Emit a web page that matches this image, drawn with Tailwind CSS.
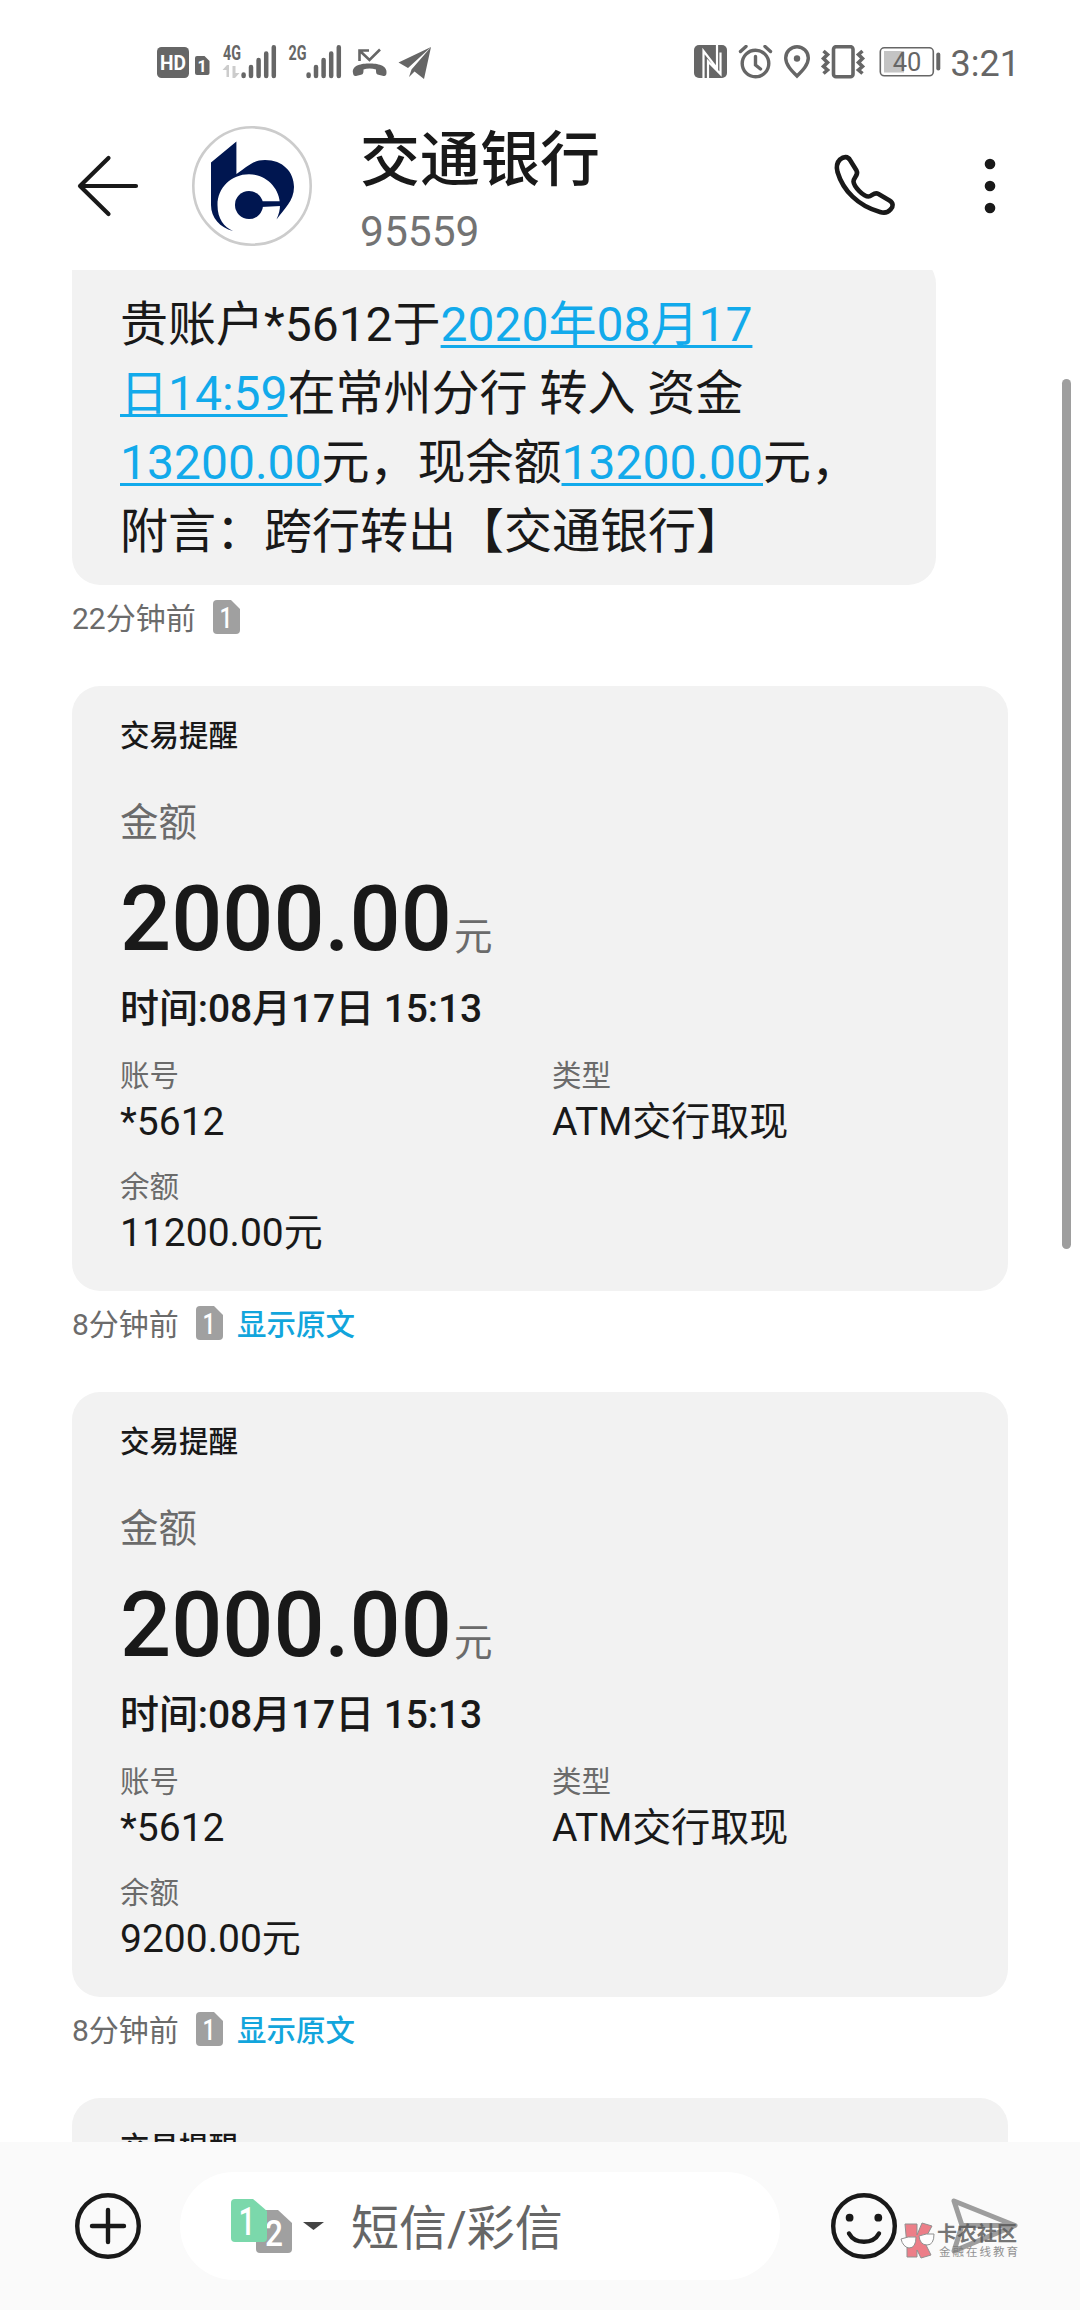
<!DOCTYPE html>
<html lang="zh-CN">
<head>
<meta charset="utf-8">
<title>交通银行</title>
<script src="https://cdn.jsdelivr.net/npm/@tailwindcss/browser@4"></script>
</head>
<body class="bg-white">
<svg class="hidden">
  <symbol id="sim" viewBox="0 0 27 34"><path d="M4 0H18L27 9V30Q27 34 23 34H4Q0 34 0 30V4Q0 0 4 0Z"/></symbol>
  <symbol id="bars" viewBox="0 0 36 34"><path d="M2.6 29.5v1.4M10 22v9M17.600 15v16M25.200 8.500v22.500M32.800 2.300v28.700" fill="none" stroke="#666" stroke-width="4.500" stroke-linecap="round"/></symbol>
</svg>
<div class="relative flex h-[2310px] w-[1080px] flex-col overflow-hidden bg-white font-['Roboto','Noto_Sans_CJK_SC',sans-serif] text-[#191919]">

  <!-- status bar -->
  <div class="flex h-[84px] shrink-0 items-start justify-between pt-[37px] pr-[60px] pl-[157px]">
    <svg class="h-[44px] w-[276px]" viewBox="157 37 276 44" fill="#666">
      <rect x="157" y="47" width="32" height="31" rx="4.500"/>
      <text x="173" y="69.500" font-size="19.500" font-weight="700" fill="#fff" text-anchor="middle" textLength="26" lengthAdjust="spacingAndGlyphs">HD</text>
      <path d="M197 56h7.500l5 5v12q0 2-2 2h-10.500q-2 0-2-2v-15q0-2 2-2z"/>
      <text x="202" y="71.500" font-size="16" font-weight="700" fill="#fff" text-anchor="middle">1</text>
      <text x="223" y="60" font-size="20" font-weight="700" textLength="18" lengthAdjust="spacingAndGlyphs">4G</text>
      <path d="M226.500 77v-7h-4l4.500-5h2v12zM235.500 66v7h4l-4.500 5h-2.500v-12z" fill="#ccc"/>
      <use href="#bars" x="241" y="45" width="36" height="34"/>
      <text x="288.500" y="60" font-size="20" font-weight="700" textLength="18" lengthAdjust="spacingAndGlyphs">2G</text>
      <use href="#bars" x="306" y="45" width="36" height="34"/>
      <path d="M359.500 61V50.500H369M360 51l9.500 9L380 49.500" fill="none" stroke="#666" stroke-width="2.600"/>
      <path d="M353 73c-1.500-8 9-9.500 16.500-9.500S387.500 65 386.500 73c-.3 3-1.500 3.300-4 2.700l-4-.9c-2.500-.6-2.500-2.300-2.500-5.300-4-1.300-9-1.300-12.500 0 0 3 0 4.700-2.500 5.300l-4 .9c-2.500.6-3.700.2-4-2.700z"/>
      <path d="M431 47l-32.500 15.500 9.500 5.500zM431 47l-19.500 22.500-2.500 7.500 5.500-5.500 9.500 7.500z"/>
    </svg>
    <div class="flex items-start pt-[8px]">
      <svg class="h-[36px] w-[248px]" viewBox="693 45 248 36" fill="none" stroke="#666">
        <rect x="694" y="45" width="33" height="33" rx="5" fill="#666" stroke="none"/>
        <path d="M703.500 78V51L717 68.500V45M703.500 51.500v26M708 78V61.500L720.500 74V52.500M717 45V68" stroke="#fff" stroke-width="2.200"/>
        <circle cx="755.500" cy="63.500" r="13.300" stroke-width="3.400"/>
        <path d="M755.500 56.500V65l5 4M740.500 51.500l5.500-5M770.500 51.500l-5.500-5" stroke-width="3.400" stroke-linecap="round"/>
        <path d="M797 76C791 70 785.700 64.500 785.700 58a11.300 11.300 0 0 1 22.600 0C808.300 64.500 803 70 797 76z" stroke-width="3.400"/>
        <circle cx="797" cy="58.500" r="3.200" fill="#666" stroke="none"/>
        <rect x="833.500" y="46.700" width="19.500" height="30" rx="2.500" stroke-width="3.600"/>
        <path d="M823.500 51l4 3.500-4 4 4 4-4 4 4 3.500-4 3.500M862.500 51l-4 3.500 4 4-4 4 4 4-4 3.500 4 3.500" stroke-width="3.600"/>
        <rect x="880.300" y="47.800" width="53" height="28" rx="4" stroke-width="1.600"/>
        <rect x="884" y="51" width="20" height="21.500" fill="#c4c4c4" stroke="none"/>
        <path d="M938.300 54.500V68.500" stroke-width="4" stroke-linecap="round"/>
        <text x="907" y="71" font-size="25.500" fill="#666" stroke="none" text-anchor="middle">40</text>
      </svg>
      <span class="ml-[10px] text-[36px] leading-[38px] text-[#666]">3:21</span>
    </div>
  </div>

  <!-- conversation header -->
  <header class="flex h-[186px] shrink-0 items-start pt-[40px] pl-[76px]">
    <svg class="mt-[28px] h-[68px] w-[64px]" viewBox="76 152 64 68" fill="none" stroke="#191919" stroke-width="4.200" stroke-linecap="round" stroke-linejoin="round"><path d="M136 186H80M108.500 158L80 186l28.500 28"/></svg>
    <svg class="mt-[2px] ml-[52px] size-[120px]" viewBox="0 0 120 120" fill="#001650">
      <circle cx="60" cy="60" r="58.700" fill="#fff" stroke="#ccc" stroke-width="2.600"/>
      <path d="M19 36.500L44.400 15.500V48C54 42 60 34 73 34C91 34 102 46 102 61C102 75 92 83 84.500 93.500C87 88 88 84 88 79C88 62 74 48.300 57 48.300C39 48.300 25.500 62 25.500 79C25.500 93 32 101 41 105C28 101.500 19 92 19 79Z"/>
      <circle cx="57" cy="79" r="14"/><path d="M69 75.300H88.500V80L69 81z"/>
    </svg>
    <div class="ml-[48px] w-[424px]">
      <div class="mt-[2px] text-[60px] leading-[70px] font-medium">交通银行</div>
      <div class="mt-[11px] text-[42.500px] leading-[50px] text-[#737373]">95559</div>
    </div>
    <svg class="mt-[28px] ml-[48px] h-[68px] w-[66px]" viewBox="832 152 66 68" fill="none" stroke="#191919" stroke-width="4.600" stroke-linejoin="round"><path d="M840 159.500C844 156 848 156.500 850 160L856.500 170.500C859 175 853.500 177.500 853.500 181.500C854 187 863.500 196.500 868.500 196.500C872 196.500 874 191.500 878.500 194L889.500 200.500C893.500 203 893.500 206.500 890.500 209.500C887.500 213 884.500 213.500 880 212C858 206 843 190.500 837.500 172C836 166.500 836.500 163 840 159.500Z"/></svg>
    <svg class="mt-[28px] ml-[82px] h-[68px] w-[20px]" viewBox="980 152 20 68" fill="#191919"><circle cx="990" cy="164" r="5.300"/><circle cx="990" cy="186" r="5.300"/><circle cx="990" cy="208" r="5.300"/></svg>
  </header>

  <!-- messages -->
  <main class="relative h-[1872px] shrink-0 overflow-hidden pl-[72px]">
    <div class="h-[315px] w-[864px] overflow-hidden rounded-b-[28px]">
      <div class="-mt-[14px] h-[329px] rounded-tr-[28px] bg-[#f2f2f2] pt-[34px] pl-[48px] text-[48px] leading-[69px] whitespace-nowrap">
        <div>贵账户*5612于<a class="text-[#12aaeb] underline decoration-[2.5px] underline-offset-[4px]">2020年08月17</a></div>
        <div><a class="text-[#12aaeb] underline decoration-[2.5px] underline-offset-[4px]">日14:59</a>在常州分行 转入 资金</div>
        <div><a class="text-[#12aaeb] underline decoration-[2.5px] underline-offset-[4px]">13200.00</a>元，现余额<a class="text-[#12aaeb] underline decoration-[2.5px] underline-offset-[4px]">13200.00</a>元，</div>
        <div>附言：跨行转出【交通银行】</div>
      </div>
    </div>
    <div class="flex h-[101px] items-start text-[30px] leading-[40px] text-[#6b6b6b]">
      <span class="mt-[14px]">22分钟前</span>
      <svg class="mt-[15px] ml-[17px] h-[34px] w-[27px]" fill="#a0a0a0"><use href="#sim"/><text x="6.500" y="28" font-size="30" font-weight="500" fill="#fff" textLength="13" lengthAdjust="spacingAndGlyphs">1</text></svg>
    </div>

    <section class="h-[605px] w-[936px] rounded-[28px] bg-[#f2f2f2] px-[48px] pt-[30px]">
      <h2 class="text-[29.500px] leading-[40px] font-medium">交易提醒</h2>
      <div class="mt-[40px] text-[38.500px] leading-[54px] text-[#6b6b6b]">金额</div>
      <div class="mt-[17px] text-[90px] leading-[106px] font-medium whitespace-nowrap">2000.00<span class="ml-[2px] text-[38.500px] leading-none font-normal text-[#6b6b6b]">元</span></div>
      <div class="mt-[11px] text-[39px] leading-[50px] font-medium tracking-[-0.1px]">时间:08月17日 15:13</div>
      <div class="mt-[24px] grid grid-cols-[432px_1fr] gap-y-[22px]">
        <div><div class="text-[29.500px] leading-[36px] text-[#6b6b6b]">账号</div><div class="mt-[3px] text-[39px] leading-[50px]">*5612</div></div>
        <div><div class="text-[29.500px] leading-[36px] text-[#6b6b6b]">类型</div><div class="mt-[3px] text-[39px] leading-[50px]">ATM交行取现</div></div>
        <div><div class="text-[29.500px] leading-[36px] text-[#6b6b6b]">余额</div><div class="mt-[3px] text-[39px] leading-[50px]">11200.00元</div></div>
      </div>
    </section>
    <div class="flex h-[101px] items-start text-[30px] leading-[40px] text-[#6b6b6b]">
      <span class="mt-[14px]">8分钟前</span>
      <svg class="mt-[15px] ml-[17px] h-[34px] w-[27px]" fill="#a0a0a0"><use href="#sim"/><text x="6.500" y="28" font-size="30" font-weight="500" fill="#fff" textLength="13" lengthAdjust="spacingAndGlyphs">1</text></svg>
      <a class="mt-[14px] ml-[14px] text-[29.500px] font-medium text-[#12a5dc]">显示原文</a>
    </div>

    <section class="h-[605px] w-[936px] rounded-[28px] bg-[#f2f2f2] px-[48px] pt-[30px]">
      <h2 class="text-[29.500px] leading-[40px] font-medium">交易提醒</h2>
      <div class="mt-[40px] text-[38.500px] leading-[54px] text-[#6b6b6b]">金额</div>
      <div class="mt-[17px] text-[90px] leading-[106px] font-medium whitespace-nowrap">2000.00<span class="ml-[2px] text-[38.500px] leading-none font-normal text-[#6b6b6b]">元</span></div>
      <div class="mt-[11px] text-[39px] leading-[50px] font-medium tracking-[-0.1px]">时间:08月17日 15:13</div>
      <div class="mt-[24px] grid grid-cols-[432px_1fr] gap-y-[22px]">
        <div><div class="text-[29.500px] leading-[36px] text-[#6b6b6b]">账号</div><div class="mt-[3px] text-[39px] leading-[50px]">*5612</div></div>
        <div><div class="text-[29.500px] leading-[36px] text-[#6b6b6b]">类型</div><div class="mt-[3px] text-[39px] leading-[50px]">ATM交行取现</div></div>
        <div><div class="text-[29.500px] leading-[36px] text-[#6b6b6b]">余额</div><div class="mt-[3px] text-[39px] leading-[50px]">9200.00元</div></div>
      </div>
    </section>
    <div class="flex h-[101px] items-start text-[30px] leading-[40px] text-[#6b6b6b]">
      <span class="mt-[14px]">8分钟前</span>
      <svg class="mt-[15px] ml-[17px] h-[34px] w-[27px]" fill="#a0a0a0"><use href="#sim"/><text x="6.500" y="28" font-size="30" font-weight="500" fill="#fff" textLength="13" lengthAdjust="spacingAndGlyphs">1</text></svg>
      <a class="mt-[14px] ml-[14px] text-[29.500px] font-medium text-[#12a5dc]">显示原文</a>
    </div>

    <section class="h-[605px] w-[936px] rounded-[28px] bg-[#f2f2f2] px-[48px] pt-[30px]">
      <h2 class="text-[29.500px] leading-[40px] font-medium">交易提醒</h2>
    </section>

    <!-- scroll thumb -->
    <div class="absolute top-[109px] right-[9px] h-[870px] w-[9px] rounded-full bg-[#9e9e9e]"></div>
  </main>

  <!-- composer -->
  <footer class="relative flex h-[168px] shrink-0 items-center bg-[#fafafa] pl-[75px]">
    <svg class="size-[66px]" viewBox="0 0 66 66" fill="none" stroke="#191919" stroke-width="4.400" stroke-linecap="round"><circle cx="33" cy="33" r="30.800"/><path d="M17 33H49M33 17V49"/></svg>
    <div class="ml-[39px] flex h-[108px] w-[600px] items-center rounded-full bg-white pl-[51px]">
      <svg class="h-[54px] w-[61px]" viewBox="0 0 61 54" font-weight="500">
        <path d="M29 11H47L61 24V50Q61 54 57 54H29Q25 54 25 50V15Q25 11 29 11Z" fill="#a0a0a0"/>
        <text x="34" y="47" font-size="37" fill="#fff" textLength="18" lengthAdjust="spacingAndGlyphs">2</text>
        <path d="M4 0H22L36 12V39Q36 43 32 43H4Q0 43 0 39V4Q0 0 4 0Z" fill="#7bd8ab"/>
        <text x="7.500" y="36" font-size="39" fill="#fff" textLength="17" lengthAdjust="spacingAndGlyphs">1</text>
      </svg>
      <svg class="ml-[11px] h-[8px] w-[21px]" viewBox="0 0 21 8"><path d="M0 0H21L10.500 8Z" fill="#444"/></svg>
      <span class="mt-[5px] ml-[27px] text-[48px] leading-[60px] text-[#666]">短信/彩信</span>
    </div>
    <svg class="ml-[51px] size-[66px]" viewBox="0 0 66 66" fill="none" stroke="#191919" stroke-width="4.400" stroke-linecap="round"><circle cx="33" cy="33" r="30.800"/><path d="M18 40.500C24 51.500 42 51.500 48 40.500"/><g fill="#191919" stroke="none"><circle cx="18.600" cy="24.700" r="3.900"/><circle cx="47.300" cy="24.700" r="3.900"/></g></svg>
    <svg class="ml-[53px] h-[60px] w-[70px]" viewBox="950 2196 70 60" fill="none" stroke="#9d9d9d" stroke-width="5" stroke-linejoin="round"><path d="M954 2201L1015 2225.500L954 2251L962 2225.500ZM962 2225.500H1015"/></svg>

    <!-- community badge over the send button -->
    <div class="absolute top-[80px] left-[900px] flex items-start gap-[2px] opacity-80">
      <svg class="h-[38px] w-[35px]" viewBox="0 0 35 38" stroke="#777" stroke-width="1"><path d="M5 2H17V13L22 1L32 4L24 19L31 33L21 36L17 28V35H7V24Z" fill="#e9606c"/><path d="M1 17Q8 14 16 15Q16 26 9 26Q3 25 1 17ZM19 14Q26 11 34 12Q34 23 27 23Q20 23 19 14Z" fill="#fff"/></svg>
      <div class="whitespace-nowrap text-[#555]">
        <div class="text-[20px] leading-[24px] font-bold">卡农社区</div>
        <div class="-mt-[2px] ml-[2px] text-[11.500px] leading-[16px] tracking-[2px] text-[#777]">金融在线教育</div>
      </div>
    </div>
  </footer>
</div>
</body>
</html>
